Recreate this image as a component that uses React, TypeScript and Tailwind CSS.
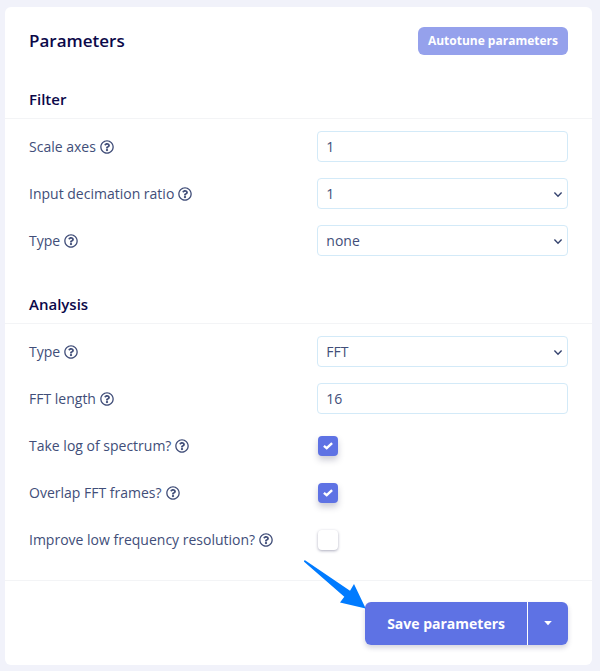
import { useId, type ReactNode } from 'react'
import { FaRegQuestionCircle } from 'react-icons/fa'

const controlClass =
  'block h-[31px] w-full appearance-none rounded border border-[#d3eaf8] bg-white px-2 text-sm text-[#414e79] outline-none focus:border-[#5e72e4]'

interface RowProps {
  id: string
  label: string
  children: ReactNode
}

function Row({ id, label, children }: RowProps) {
  return (
    <div className="grid h-[47px] grid-cols-[23fr_20fr] items-center">
      <div className="flex items-center gap-1">
        <label htmlFor={id} className="whitespace-nowrap">
          {label}
        </label>
        <FaRegQuestionCircle className="size-3.5 shrink-0" aria-hidden="true" />
      </div>
      {children}
    </div>
  )
}

function TextRow({ label, value }: { label: string; value: string }) {
  const id = useId()

  return (
    <Row id={id} label={label}>
      <input id={id} type="text" defaultValue={value} className={controlClass} />
    </Row>
  )
}

function SelectRow({ label, options }: { label: string; options: string[] }) {
  const id = useId()

  return (
    <Row id={id} label={label}>
      <div className="relative">
        <select id={id} className={controlClass}>
          {options.map((option) => (
            <option key={option}>{option}</option>
          ))}
        </select>
        <svg
          viewBox="0 0 10 8"
          className="pointer-events-none absolute top-3 right-[5px] h-2 w-2.5"
          fill="none"
          stroke="#36446f"
          strokeWidth="1.4"
          aria-hidden="true"
        >
          <path d="M1.4 2.6 5 6.2 8.6 2.6" />
        </svg>
      </div>
    </Row>
  )
}

function CheckRow({ label, checked = false }: { label: string; checked?: boolean }) {
  const id = useId()

  return (
    <Row id={id} label={label}>
      <div className="relative ml-px size-5">
        <input
          id={id}
          type="checkbox"
          defaultChecked={checked}
          className="peer block size-5 appearance-none rounded bg-white shadow-[0_1px_3px_rgba(50,50,93,0.4)] checked:bg-[#5e72e4] checked:shadow-[0_4px_6px_rgba(50,50,93,0.25)]"
        />
        <svg
          viewBox="0 0 10 8"
          className="pointer-events-none absolute top-1.5 left-[5px] hidden h-2 w-2.5 peer-checked:block"
          fill="none"
          stroke="#fff"
          strokeWidth="2.4"
          aria-hidden="true"
        >
          <path d="M.9 3.8 3.7 6.2 9.1 1.1" />
        </svg>
      </div>
    </Row>
  )
}

function Section({ title, children }: { title: string; children: ReactNode }) {
  return (
    <section className="pt-7">
      <h2 className="border-b border-[#f3f4f6] px-6 pb-[7px] text-[15px] leading-6 font-semibold text-[#0b0849]">
        {title}
      </h2>
      <div className="px-6 pt-1">{children}</div>
    </section>
  )
}

export default function App() {
  return (
    <main className="min-h-screen bg-[#f1f2fa] pt-[7px] pr-2 pb-1.5 pl-[5px] font-['Open_Sans',sans-serif] text-sm text-[#414e79]">
      <form className="rounded-md bg-white" onSubmit={(e) => e.preventDefault()}>
        <header className="flex items-center justify-between px-6 pt-5 pb-1">
          <h1 className="text-[17px] leading-7 font-semibold text-[#0b0849]">Parameters</h1>
          <button
            type="button"
            className="h-7 rounded-md bg-[#95a1ec] px-2.5 text-xs font-bold whitespace-nowrap text-white"
          >
            Autotune parameters
          </button>
        </header>

        <Section title="Filter">
          <TextRow label="Scale axes" value="1" />
          <SelectRow label="Input decimation ratio" options={['1', '3', '10']} />
          <SelectRow label="Type" options={['none', 'low', 'high']} />
        </Section>

        <Section title="Analysis">
          <SelectRow label="Type" options={['FFT', 'Wavelet']} />
          <TextRow label="FFT length" value="16" />
          <CheckRow label="Take log of spectrum?" checked />
          <CheckRow label="Overlap FFT frames?" checked />
          <CheckRow label="Improve low frequency resolution?" />
        </Section>

        <footer className="mt-[17px] flex justify-end border-t border-[#f3f4f6] px-6 pt-[21px] pb-5">
          <div className="relative flex h-[43px] gap-px rounded-md shadow-[0_3px_5px_rgba(50,50,93,0.2)]">
            <button
              type="submit"
              className="rounded-l-md bg-[#5e72e4] px-[22px] text-sm font-bold whitespace-nowrap text-white"
            >
              Save parameters
            </button>
            <button
              type="button"
              aria-label="More save options"
              className="flex w-10 items-center justify-center rounded-r-md bg-[#5e72e4] text-white"
            >
              <svg viewBox="0 0 8 6" className="h-1.5 w-2" fill="currentColor" aria-hidden="true">
                <path d="M.2 0h7.6L4 4.2Z" />
              </svg>
            </button>
            <svg
              viewBox="0 0 62 50"
              className="pointer-events-none absolute -top-[42px] -left-[61px] h-[50px] w-[62px]"
              fill="#007bff"
              aria-hidden="true"
            >
              <path d="M0 .9Q.3 0 1.4.4L46 30.7 50 24l11.7 24.5L36 42.4l4.3-5.7L.4 2Q-.2 1.5 0 .9Z" />
            </svg>
          </div>
        </footer>
      </form>
    </main>
  )
}
